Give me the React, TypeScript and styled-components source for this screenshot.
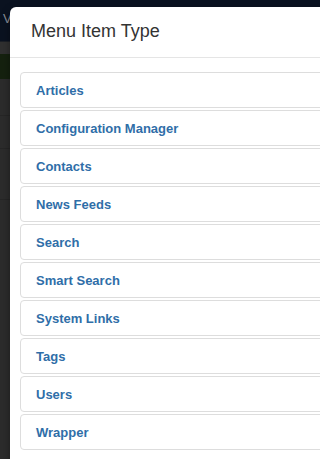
import React from "react";
import styled, { createGlobalStyle } from "styled-components";

const Global = createGlobalStyle`
  html, body { margin: 0; padding: 0; overflow: hidden; }
  body { background: #2c2c2c; font-family: "Liberation Sans", Arial, sans-serif; }
`;

const Page = styled.div`
  position: relative;
  width: 320px;
  height: 459px;
  overflow: hidden;
  background: #2c2c2c;
`;

const NavBar = styled.div`
  height: 42px;
  background: #0a1220;
  display: flex;
  align-items: flex-start;
  padding: 11px 0 0 3px;
  box-sizing: border-box;
  color: #8a8f98;
  font-size: 13px;
  border-bottom: 1px solid #1b1f26;
`;

const SubBar = styled.div`
  height: 12px;
  background: #303030;
`;

const GreenBar = styled.div`
  height: 25px;
  background: #15210f;
`;

const Row = styled.div<{ $h: number }>`
  height: ${(p) => p.$h}px;
  border-bottom: 1px solid #262626;
`;

const Modal = styled.div`
  position: absolute;
  left: 10px;
  top: 7px;
  width: 360px;
  height: 500px;
  background: #fff;
  border-radius: 6px 6px 0 0;
  box-shadow: 0 3px 9px rgba(0, 0, 0, 0.4);
`;

const Header = styled.div`
  height: 50px;
  padding: 0 21px;
  display: flex;
  align-items: center;
  border-bottom: 1px solid #e5e5e5;
`;

const Title = styled.h3`
  margin: 0;
  font-size: 18px;
  font-weight: 400;
  color: #333;
  line-height: 1.1;
`;

const Body = styled.div`
  padding: 14px 0 0 10px;
  display: flex;
  flex-direction: column;
  gap: 2px;
`;

const Item = styled.a`
  display: flex;
  align-items: center;
  box-sizing: border-box;
  height: 36px;
  padding-left: 15px;
  border: 1px solid #ddd;
  border-radius: 4px;
  color: #2f6ea8;
  font-weight: 700;
  font-size: 13px;
  text-decoration: none;
`;

const items = [
  "Articles",
  "Configuration Manager",
  "Contacts",
  "News Feeds",
  "Search",
  "Smart Search",
  "System Links",
  "Tags",
  "Users",
  "Wrapper",
];

export default function App() {
  return (
    <>
      <Global />
      <Page>
        <NavBar>View</NavBar>
        <SubBar />
        <GreenBar />
        <Row $h={36} />
        <Row $h={32} />
        <Row $h={50} />
        <Modal>
          <Header>
            <Title>Menu Item Type</Title>
          </Header>
          <Body>
            {items.map((t) => (
              <Item key={t} href="#">
                {t}
              </Item>
            ))}
          </Body>
        </Modal>
      </Page>
    </>
  );
}
